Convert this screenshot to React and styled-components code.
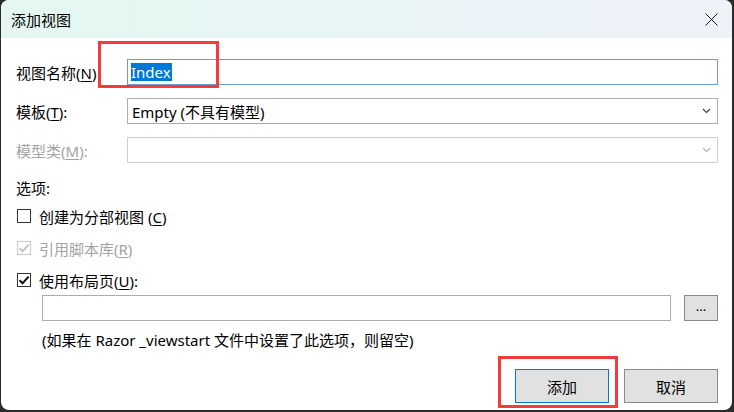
import React from "react";
import styled, { createGlobalStyle } from "styled-components";

const GlobalStyle = createGlobalStyle`
  html, body {
    margin: 0;
    padding: 0;
    background: #2b2b2b;
    width: 734px;
    height: 412px;
    overflow: hidden;
    font-family: "Noto Sans", "Noto Sans CJK SC", sans-serif;
  }
`;

// Window frame
const Dialog = styled.div`
  position: relative;
  margin-left: 1px;
  width: 731px;
  height: 410px;
  background: #ffffff;
  border-radius: 8px;
  overflow: hidden;
  display: flex;
  flex-direction: column;
`;

const TitleBar = styled.div`
  height: 38px;
  flex: none;
  display: flex;
  align-items: center;
  justify-content: space-between;
  padding: 0 14px 0 10px;
  background: linear-gradient(90deg, #e3f7f0 0%, #e9f4f6 55%, #eef2f9 100%);
  font-size: 15px;
  color: #000;
`;

const CloseButton = styled.div`
  width: 14px;
  height: 14px;
  display: flex;
  align-items: center;
  justify-content: center;
`;

const Body = styled.div`
  display: flex;
  flex-direction: column;
  padding: 21px 14px 0 15px;
  font-size: 15px;
  color: #000;
`;

const FieldRow = styled.div`
  display: flex;
  align-items: center;
  height: 26px;
  margin-bottom: 13px;
`;

const Label = styled.div`
  width: 111px;
  flex: none;
  white-space: nowrap;
  color: ${(p) => (p.disabled ? "#a3a3a3" : "#000")};
`;

const Key = styled.span`
  text-decoration: underline;
  text-underline-offset: 2px;
`;

const TextBox = styled.div`
  flex: 1;
  height: 26px;
  box-sizing: border-box;
  border: 1px solid ${(p) => (p.focused ? "#6d9bd6" : "#adadad")};
  background: #fff;
  display: flex;
  align-items: center;
  padding-left: 3px;
`;

const Selected = styled.span`
  background: #0078d7;
  color: #fff;
  line-height: 18px;
  padding: 0 1px 0 0;
`;

const Select = styled.div`
  flex: 1;
  height: 26px;
  box-sizing: border-box;
  border: 1px solid ${(p) => (p.disabled ? "#cfcfcf" : "#adadad")};
  background: #fff;
  display: flex;
  align-items: center;
  justify-content: space-between;
  padding: 0 6px 0 4px;
`;

const SectionLabel = styled.div`
  line-height: 20px;
  margin-top: 2px;
`;

const CheckRow = styled.div`
  display: flex;
  align-items: center;
  height: 28px;
  margin-top: 4px;
  padding-left: 1px;
  gap: 8px;
  color: ${(p) => (p.disabled ? "#a3a3a3" : "#000")};
`;

const Box = styled.div`
  width: 14px;
  height: 14px;
  box-sizing: border-box;
  border: 1px solid ${(p) => (p.disabled ? "#c8c8c8" : "#333")};
  background: #fff;
  display: flex;
  align-items: center;
  justify-content: center;
`;

const LayoutRow = styled.div`
  display: flex;
  align-items: center;
  margin: 1px 0 0 26px;
  gap: 13px;
`;

const BrowseButton = styled.div`
  width: 34px;
  height: 26px;
  box-sizing: border-box;
  border: 1px solid #8a8a8a;
  background: #e1e1e1;
  display: flex;
  align-items: center;
  justify-content: center;
  font-size: 13px;
  padding-bottom: 4px;
`;

const Hint = styled.div`
  margin: 9px 0 0 26px;
  line-height: 20px;
  white-space: nowrap;
`;

const Footer = styled.div`
  display: flex;
  justify-content: flex-end;
  gap: 15px;
  margin-top: 19px;
`;

const Button = styled.div`
  width: 94px;
  height: 34px;
  box-sizing: border-box;
  border: 1px solid ${(p) => (p.primary ? "#0078d7" : "#8a8a8a")};
  background: #e1e1e1;
  display: flex;
  align-items: center;
  justify-content: center;
`;

// Red annotation boxes drawn over the dialog
const Mark = styled.div`
  position: absolute;
  box-sizing: border-box;
  border: 3px solid #f53b3b;
  pointer-events: none;
`;

const Chevron = ({ color }) => (
  <svg width="9" height="6" viewBox="0 0 9 6">
    <path d="M1 1 L4.5 4.5 L8 1" fill="none" stroke={color} strokeWidth="1.2" />
  </svg>
);

const Check = ({ color }) => (
  <svg width="12" height="12" viewBox="0 0 12 12">
    <path d="M1.5 6.2 L4.6 9.2 L10.6 2.6" fill="none" stroke={color} strokeWidth="2" />
  </svg>
);

export default function App() {
  return (
    <>
      <GlobalStyle />
      <Dialog>
        <TitleBar>
          <span>添加视图</span>
          <CloseButton>
            <svg width="13" height="13" viewBox="0 0 13 13">
              <path d="M0.5 0.5 L12.5 12.5 M12.5 0.5 L0.5 12.5" stroke="#1a1a1a" strokeWidth="1" />
            </svg>
          </CloseButton>
        </TitleBar>
        <Body>
          <FieldRow>
            <Label>
              视图名称(<Key>N</Key>)
            </Label>
            <TextBox focused>
              <Selected>Index</Selected>
            </TextBox>
          </FieldRow>
          <FieldRow>
            <Label>
              模板(<Key>T</Key>):
            </Label>
            <Select>
              <span>Empty (不具有模型)</span>
              <Chevron color="#444" />
            </Select>
          </FieldRow>
          <FieldRow>
            <Label disabled>
              模型类(<Key>M</Key>):
            </Label>
            <Select disabled>
              <span />
              <Chevron color="#b5b5b5" />
            </Select>
          </FieldRow>
          <SectionLabel>选项:</SectionLabel>
          <CheckRow>
            <Box />
            <span>
              创建为分部视图 (<Key>C</Key>)
            </span>
          </CheckRow>
          <CheckRow disabled>
            <Box disabled>
              <Check color="#c4c4c4" />
            </Box>
            <span>
              引用脚本库(<Key>R</Key>)
            </span>
          </CheckRow>
          <CheckRow>
            <Box>
              <Check color="#111" />
            </Box>
            <span>
              使用布局页(<Key>U</Key>):
            </span>
          </CheckRow>
          <LayoutRow>
            <TextBox />
            <BrowseButton>...</BrowseButton>
          </LayoutRow>
          <Hint>(如果在 Razor _viewstart 文件中设置了此选项，则留空)</Hint>
          <Footer>
            <Button primary>添加</Button>
            <Button>取消</Button>
          </Footer>
        </Body>
        <Mark style={{ left: 97, top: 41, width: 121, height: 47 }} />
        <Mark style={{ left: 497, top: 356, width: 120, height: 52 }} />
      </Dialog>
    </>
  );
}
